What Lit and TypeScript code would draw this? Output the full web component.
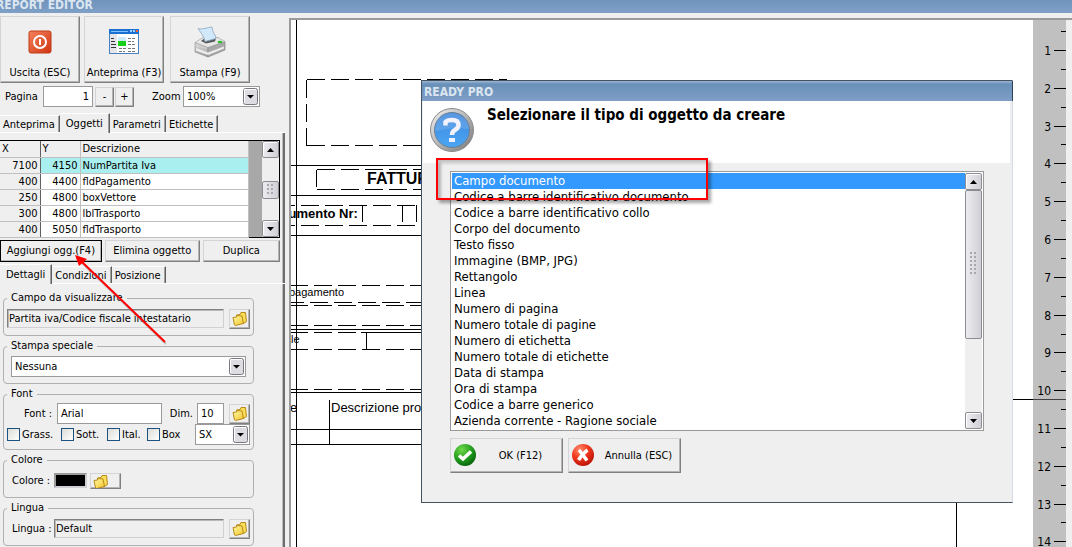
import { LitElement, html, svg, css } from "lit";
import { customElement, property } from "lit/decorators.js";
import { classMap } from "lit/directives/class-map.js";

const shared = css`
  :host,
  button,
  input,
  select {
    font-family: "DejaVu Sans Condensed", "Noto Sans", sans-serif;
    font-size: 11px;
    line-height: 14px;
    color: #000;
  }
  * {
    box-sizing: border-box;
  }
  button {
    margin: 0;
    padding: 0;
    background: #efefef;
    border: 1px solid;
    border-color: #d4d4d8 #808080 #808080 #d4d4d8;
    box-shadow: inset -1px -1px #b4b4b4;
    white-space: nowrap;
  }
  svg {
    display: block;
  }
`;

const folder = html`<svg width="16" height="16" viewBox="0 0 16 16" aria-hidden="true">
  <defs>
    <linearGradient id="fo" x1="0" y1="0" x2="1" y2="1">
      <stop offset="0" stop-color="#fff9a8" />
      <stop offset="1" stop-color="#f3c428" />
    </linearGradient>
  </defs>
  <path d="M4.500 4L8 3.500L9 1.500L13.500 1.500L14.500 10.500L11.500 12.500L5 12Z" fill="#f9dc58" stroke="#b88a18" />
  <path d="M1 6.500L4.500 6L5.500 4.500L10 5L11.500 12.500L3.500 14.500L2.500 14Z" fill="url(#fo)" stroke="#b88a18" />
</svg>`;

@customElement("drop-down")
class DropDown extends LitElement {
  @property() value = "";
  @property() label = "";
  static styles = [
    shared,
    css`
      :host {
        display: flex;
        position: relative;
        height: 21px;
      }
      select {
        appearance: none;
        width: 100%;
        border: 1px solid #9a9a9a;
        border-radius: 0;
        background: #fff;
        padding: 0 20px 0 3px;
        outline: none;
      }
      .arrow {
        position: absolute;
        right: 1px;
        top: 2px;
        pointer-events: none;
      }
    `,
  ];
  render() {
    return html`<select aria-label=${this.label}>
        <option>${this.value}</option>
      </select>
      <svg class="arrow" width="16" height="17" viewBox="0 0 16 17">
        <rect x="0.5" y="0.5" width="14" height="16" rx="2" fill="#dcdce2" stroke="#77777f" />
        <path d="M1.5 15V1.5H13" fill="none" stroke="#fff" />
        <path d="M4 7H11L7.5 10.5Z" fill="#000" />
      </svg>`;
  }
}

@customElement("scroll-bar")
class ScrollBar extends LitElement {
  static styles = [
    shared,
    css`
      :host {
        display: flex;
        flex-direction: column;
        width: 17px;
        background: #efefef;
      }
      .end,
      .thumb {
        border: 1px solid #8c8c92;
        border-radius: 2px;
        background: linear-gradient(90deg, #ececf0, #cfcfd6);
      }
      .end {
        height: 17px;
        flex: none;
        display: grid;
        place-items: center;
        box-shadow: inset 1px 1px #fff;
      }
      .before {
        flex: var(--before, 0) 0 0;
      }
      .after {
        flex: var(--after, 1) 0 0;
      }
      .thumb {
        flex: var(--thumb, 1) 0 0;
        display: grid;
        place-items: center;
      }
      .grip {
        width: 7px;
        height: var(--grip, 11px);
        background: radial-gradient(circle at 1px 1px, #a8a8ae 1px, transparent 1px) 0 0 / 4px 4px;
      }
    `,
  ];
  render() {
    return html`<div class="end">
        <svg width="7" height="4" viewBox="0 0 7 4"><path d="M0 4H7L3.5 0Z" /></svg>
      </div>
      <div class="before"></div>
      <div class="thumb"><div class="grip"></div></div>
      <div class="after"></div>
      <div class="end">
        <svg width="7" height="4" viewBox="0 0 7 4"><path d="M0 0H7L3.5 4Z" /></svg>
      </div>`;
  }
}

@customElement("tab-strip")
class TabStrip extends LitElement {
  @property({ type: Array }) tabs: string[] = [];
  @property({ type: Number }) active = 0;
  static styles = [
    shared,
    css`
      :host {
        display: flex;
        align-items: flex-end;
        height: 20px;
        border-bottom: 1px solid #fff;
      }
      button {
        height: 17px;
        padding: 2px 4px 0 3px;
        border: 0;
        border-top: 1px solid #fff;
        border-right: 1px solid #606060;
        box-shadow: inset -1px 0 #a0a0a0;
      }
      .active {
        height: 20px;
        padding: 1px 6px 0;
        margin-bottom: -1px;
      }
    `,
  ];
  render() {
    return this.tabs.map(
      (t, i) => html`<button role="tab" class=${classMap({ active: i === this.active })}>${t}</button>`
    );
  }
}

const ROWS = [
  ["7100", "4150", "NumPartita Iva"],
  ["400", "4400", "fldPagamento"],
  ["250", "4800", "boxVettore"],
  ["300", "4800", "lblTrasporto"],
  ["400", "5050", "fldTrasporto"],
];

@customElement("side-panel")
class SidePanel extends LitElement {
  static styles = [
    shared,
    css`
      :host {
        display: flex;
        flex-direction: column;
        position: relative;
        background: #efefef;
        padding-top: 3px;
      }
      .tools {
        display: flex;
        gap: 4px;
      }
      .tool {
        width: 80px;
        height: 67px;
        display: flex;
        flex-direction: column;
        align-items: center;
        justify-content: space-between;
        padding: 9px 0 2px;
      }
      .tool:last-child {
        margin-left: 2px;
      }
      .pager {
        display: flex;
        align-items: center;
        height: 21px;
        margin: 3px 0 6px;
        padding-left: 5px;
        flex: none;
      }
      .pager label {
        width: 38px;
      }
      .pager .zoom {
        width: 31px;
        margin-left: 18px;
      }
      .pager drop-down {
        width: 77px;
      }
      tab-strip {
        flex: none;
        width: 285px;
      }
      input {
        border: 1px solid #9a9a9a;
        border-radius: 0;
        background: #fff;
        padding: 0 3px;
        height: 21px;
        margin: 0;
        outline: none;
        min-width: 0;
      }
      .page {
        width: 50px;
        text-align: right;
      }
      .step {
        width: 19px;
        height: 20px;
        margin-left: 1px;
      }
      .page + .step {
        margin-left: 2px;
      }
      .sheet {
        flex: 1;
        width: 285px;
        border-right: 2px solid #6c6c6c;
        box-shadow: inset -1px 0 #bdbdbd;
        padding-top: 7px;
      }
      .grid {
        display: flex;
        width: 280px;
        height: 98px;
        border: 1px solid #000;
        border-left: 0;
        background: #a8a8a8;
      }
      table {
        border-collapse: collapse;
        table-layout: fixed;
        width: 249px;
        border-right: 1px solid #606060;
      }
      th,
      td {
        height: 16px;
        padding: 0 2px;
        font-weight: normal;
        text-align: left;
        background: #fff;
        border-right: 1px solid #c0c0c0;
        border-bottom: 1px solid #c0c0c0;
        white-space: nowrap;
        line-height: 15px;
      }
      th {
        background: #efefef;
      }
      .num {
        text-align: right;
      }
      .first {
        background: #efefef;
        border-right: 1px solid #606060;
      }
      .on td:not(.first) {
        background: #a9efef;
      }
      .grid scroll-bar {
        margin-left: auto;
        --before: 24;
        --thumb: 16;
        --after: 22;
      }
      .actions {
        display: flex;
        gap: 3px;
        width: 280px;
        margin: 2px 0 2px;
      }
      .actions button {
        height: 22px;
        flex: 95 0 0;
      }
      .actions .main {
        flex: 102 0 0;
        border-color: #000;
      }
      .actions .last {
        flex: 77 0 0;
      }
      .details {
        width: 284px;
        padding: 7px 30px 0 3px;
      }
      fieldset {
        border: 1px solid #b0b0b0;
        border-radius: 4px;
        margin: 0 0 3px;
        padding: 3px 3px 6px;
        min-width: 0;
      }
      .tight {
        padding: 2px 3px 4px;
      }
      legend {
        padding: 0 4px;
        margin-left: 0;
        height: 14px;
      }
      .line {
        display: flex;
        align-items: center;
        height: 21px;
      }
      .pad {
        padding-left: 4px;
      }
      .read {
        flex: 1;
        height: 19px;
        padding: 0 1px;
        background: #efefef;
        border-color: #808080 #d0d0d4 #d0d0d4 #808080;
        box-shadow: inset 1px 1px #b8b8b8;
      }
      .pick {
        width: 21px;
        height: 20px;
        margin-left: 5px;
        flex: none;
        display: grid;
        place-items: center;
      }
      .wide {
        width: 31px;
        height: 16px;
        margin-left: 3px;
        padding-right: 10px;
        overflow: hidden;
      }
      .fill {
        flex: 1;
        margin-right: 4px;
      }
      .checks label {
        display: flex;
        align-items: center;
        gap: 2px;
        flex: none;
      }
      .checks label {
        width: 46px;
      }
      .checks label:first-child {
        width: 54px;
      }
      .checks label:nth-child(3) {
        width: 40px;
      }
      .checks input {
        appearance: none;
        width: 13px;
        height: 13px;
        flex: none;
        border: 1px solid #1c5180;
        background: linear-gradient(135deg, #dcdcd7, #fff);
        padding: 0;
      }
      .checks drop-down {
        width: 55px;
        margin-left: auto;
      }
      .swatch {
        width: 33px;
        height: 15px;
        background: #000;
        border: 2px solid;
        border-color: #9a9a9a #d0d0d4 #d0d0d4 #9a9a9a;
      }
      .cap {
        width: 47px;
        padding-left: 5px;
        flex: none;
        white-space: nowrap;
      }
      .indent {
        width: 50px;
        padding-left: 17px;
      }
      .dim {
        margin: 0 4px 0 auto;
      }
      .name {
        width: 105px;
      }
      .size {
        width: 27px;
      }
      .pointer {
        position: absolute;
        left: 70px;
        top: 237px;
        pointer-events: none;
      }
    `,
  ];
  render() {
    return html`
      <div class="tools">
        <button class="tool">
          <svg width="32" height="32" viewBox="0 0 32 32">
            <defs>
              <linearGradient id="pw" x1="0" y1="0" x2="1" y2="1">
                <stop offset="0" stop-color="#f4835c" /><stop offset="1" stop-color="#cf3410" />
              </linearGradient>
            </defs>
            <rect x="5" y="5" width="22" height="22" rx="2" fill="url(#pw)" stroke="#c23a18" />
            <circle cx="16" cy="16" r="6" fill="none" stroke="#fff" stroke-width="2" />
            <path d="M16 13V19" stroke="#fff" stroke-width="2" />
          </svg>
          Uscita (ESC)
        </button>
        <button class="tool">
          <svg width="32" height="32" viewBox="0 0 32 32">
            <rect x="1.500" y="3.500" width="29" height="24" fill="#fff" stroke="#4a80c0" />
            <rect x="1" y="3" width="30" height="5" fill="#1a6fd0" />
            <path d="M3 5.500H20" stroke="#7ec0ff" />
            <rect x="22" y="4" width="2" height="2" fill="#9fd0ff" />
            <rect x="25" y="4" width="2" height="2" fill="#9fd0ff" />
            <rect x="28" y="4" width="2" height="2" fill="#f06030" />
            <rect x="2" y="8" width="7" height="19" fill="#e4e4ea" />
            <path d="M3 12.500H6M3 15.500H7M3 18.500H8M3 21.500H8" stroke="#333" />
            <rect x="10" y="11" width="8" height="5" fill="#cfeaf8" />
            <rect x="10" y="15" width="8" height="5" fill="#18d018" />
            <path d="M20 12.500H28M20 15.500H26M20 18.500H28M11 22.500H18M20 22.500H28M11 25.500H17M20 25.500H27" stroke="#777" stroke-dasharray="3 1" />
          </svg>
          Anteprima (F3)
        </button>
        <button class="tool">
          <svg width="32" height="32" viewBox="0 0 32 32">
            <defs>
              <linearGradient id="pl" x1="0" y1="0" x2="0" y2="1">
                <stop offset="0" stop-color="#e4e4e4" /><stop offset="1" stop-color="#9a9a9a" />
              </linearGradient>
            </defs>
            <path d="M1 16.500L14 21.500V31L1 26Z" fill="url(#pl)" stroke="#8c8c8c" stroke-width="0.6" />
            <path d="M14 21.500L31 15.500V24L14 31Z" fill="#a8a8a8" stroke="#808080" stroke-width="0.6" />
            <path d="M2 22L14 26.500L30 20.500V22.500L14 29L2 24.500Z" fill="#ededed" />
            <path d="M1 16.500L9 11.500L24 11.500L31 15.500L14 21.500Z" fill="#e8e8e8" stroke="#999" stroke-width="0.6" />
            <path d="M7 15L11 12H22L21 15.500L12 17.500Z" fill="#5a5a5a" />
            <path d="M4 2.500C9 4 14 1 18 1C18 6 22 9 22 12.500L11 15.500C10 10 7 7 4 2.500Z" fill="#d2e8fb" stroke="#8aa4bd" stroke-width="0.8" />
            <ellipse cx="26" cy="16" rx="2.500" ry="1.300" fill="#2fc02f" />
          </svg>
          Stampa (F9)
        </button>
      </div>
      <div class="pager">
        <label for="page">Pagina</label>
        <input id="page" class="page" value="1" />
        <button class="step">-</button>
        <button class="step">+</button>
        <span class="zoom">Zoom</span>
        <drop-down label="Zoom" value="100%"></drop-down>
      </div>
      <tab-strip .tabs=${["Anteprima", "Oggetti", "Parametri", "Etichette"]} active="1"></tab-strip>
      <div class="sheet">
        <div class="grid">
          <table>
            <colgroup>
              <col style="width:40px" />
              <col style="width:40px" />
              <col />
            </colgroup>
            <tr>
              <th class="first">X</th>
              <th>Y</th>
              <th>Descrizione</th>
            </tr>
            ${ROWS.map(
              (r, i) => html`<tr class=${classMap({ on: i === 0 })}>
                <td class="num first">${r[0]}</td>
                <td class="num">${r[1]}</td>
                <td>${r[2]}</td>
              </tr>`
            )}
          </table>
          <scroll-bar></scroll-bar>
        </div>
        <div class="actions">
          <button class="main">Aggiungi ogg.(F4)</button>
          <button>Elimina oggetto</button>
          <button class="last">Duplica</button>
        </div>
        <tab-strip .tabs=${["Dettagli", "Condizioni", "Posizione"]} active="0"></tab-strip>
        <div class="details">
          <fieldset>
            <legend>Campo da visualizzare</legend>
            <div class="line">
              <input class="read" aria-label="Campo da visualizzare" readonly value="Partita iva/Codice fiscale intestatario" />
              <button class="pick" aria-label="Scegli campo">${folder}</button>
            </div>
          </fieldset>
          <fieldset>
            <legend>Stampa speciale</legend>
            <div class="line pad">
              <drop-down class="fill" label="Stampa speciale" value="Nessuna"></drop-down>
            </div>
          </fieldset>
          <fieldset class="tight">
            <legend>Font</legend>
            <div class="line">
              <label class="indent" for="font">Font :</label>
              <input id="font" class="name" value="Arial" />
              <label class="dim" for="size">Dim.</label>
              <input id="size" class="size" value="10" />
              <button class="pick" aria-label="Scegli font">${folder}</button>
            </div>
            <div class="line checks">
              <label><input type="checkbox" />Grass.</label>
              <label><input type="checkbox" />Sott.</label>
              <label><input type="checkbox" />Ital.</label>
              <label><input type="checkbox" />Box</label>
              <drop-down label="Allineamento" value="SX"></drop-down>
            </div>
          </fieldset>
          <fieldset>
            <legend>Colore</legend>
            <div class="line">
              <span class="cap">Colore :</span>
              <div class="swatch"></div>
              <button class="pick wide" aria-label="Scegli colore">${folder}</button>
            </div>
          </fieldset>
          <fieldset>
            <legend>Lingua</legend>
            <div class="line">
              <label class="cap" for="lang">Lingua :</label>
              <input id="lang" class="read" readonly value="Default" />
              <button class="pick" aria-label="Scegli lingua">${folder}</button>
            </div>
          </fieldset>
        </div>
      </div>
      <svg class="pointer" width="100" height="96" viewBox="0 0 100 96">
        <path d="M96 94L12 13" stroke="#999" stroke-width="2" opacity="0.5" />
        <path d="M95 92L11 11" stroke="#f00" stroke-width="2" />
        <path d="M5 5L17 9L9 16Z" fill="#f00" />
      </svg>
    `;
  }
}

@customElement("report-canvas")
class ReportCanvas extends LitElement {
  static styles = [
    shared,
    css`
      :host {
        display: block;
        background: #fff;
        overflow: hidden;
      }
      svg {
        width: 100%;
        height: 100%;
      }
      .lines {
        stroke: #000;
        fill: none;
        shape-rendering: crispEdges;
      }
      .dashed {
        stroke-dasharray: 18 6;
      }
      text {
        font-family: "Liberation Sans", sans-serif;
      }
      .big {
        font-size: 16px;
        font-weight: bold;
      }
      .mid {
        font-size: 13px;
        font-weight: bold;
      }
      .plain {
        font-size: 13px;
      }
      .small {
        font-size: 11px;
      }
    `,
  ];
  render() {
    return html`<svg>
      <text class="big" x="76" y="164">FATTURA</text>
      <text class="mid" x="-27" y="198">Documento Nr:</text>
      <text class="small" x="-2" y="276">pagamento</text>
      <text class="small" x="-6" y="323">ale</text>
      <text class="plain" x="-1" y="392">e</text>
      <text class="plain" x="40" y="392">Descrizione prodotto</text>
      <g class="lines">
        <path d="M5.500 0V600M0 145.500H300M0 175.500H300M0 215.500H300M0 309.500H300M0 372.500H300M0 409.500H300M0 424.500H300M38.500 380V424M75.500 312V329M71.500 185V202M111.500 185V202M125.500 185V202M70 312.500H300M665.500 379V600M665.500 379.500H800" />
        <path class="dashed" d="M15.500 59.500H216M15.500 59.500V126M15.500 125.500H216M25.500 149.500H216M25.500 149.500V167M25.500 169.500H216M-14 185.500H126M-14 205.500H126M-1 265.500H300M-5 282.500H300M-1 285.500H300M-1 305.500H300M-1 312.500H70M-1 329.500H300M-1 369.500H300" />
      </g>
    </svg>`;
  }
}

@customElement("side-ruler")
class SideRuler extends LitElement {
  static styles = [
    shared,
    css`
      :host {
        display: block;
        background: #c0c0c0;
        overflow: hidden;
      }
      svg {
        width: 33px;
        height: 100%;
      }
      text {
        font-size: 12px;
        text-anchor: end;
      }
      path {
        stroke: #000;
        shape-rendering: crispEdges;
      }
      .edge {
        stroke: #404040;
      }
    `,
  ];
  render() {
    const marks = Array.from({ length: 14 }, (_, i) => i + 1);
    return html`<svg>
      ${marks.map((n) => {
        const y = Math.round(n * 37.8 - 7.8) + 0.5;
        const half = Math.round(n * 37.8 - 26.7) + 0.5;
        return svg`<path d="M21 ${y}H33M28 ${half}H33" /><text x="18" y=${y + 4}>${n}</text>`;
      })}
      <path class="edge" d="M0 379.500H33" />
    </svg>`;
  }
}

const ITEMS = [
  "Campo documento",
  "Codice a barre identificativo documento",
  "Codice a barre identificativo collo",
  "Corpo del documento",
  "Testo fisso",
  "Immagine (BMP, JPG)",
  "Rettangolo",
  "Linea",
  "Numero di pagina",
  "Numero totale di pagine",
  "Numero di etichetta",
  "Numero totale di etichette",
  "Data di stampa",
  "Ora di stampa",
  "Codice a barre generico",
  "Azienda corrente - Ragione sociale",
];

@customElement("object-dialog")
class ObjectDialog extends LitElement {
  static styles = [
    shared,
    css`
      :host {
        display: block;
        background: #efefef;
        border: 1px solid #44525f;
        border-right-color: #d5dbe3;
      }
      .title {
        height: 20px;
        padding: 3px 2px 0;
        background: linear-gradient(#9db8d3, #6990b8 3px, #7f9fc6);
        box-shadow: 1px 0 #2d4258;
        color: #dbe5f0;
        font-size: 12px;
        font-weight: bold;
        line-height: 16px;
      }
      .head {
        display: flex;
        gap: 12px;
        height: 62px;
        margin: 0 2px 0 1px;
        padding: 6px 6px;
        background: #fff;
      }
      h1 {
        margin: 0;
        font-size: 15px;
        line-height: 16px;
      }
      .body {
        padding: 8px 28px 29px;
      }
      .list {
        display: flex;
        border: 1px solid #9a9a9a;
        padding: 1px;
        background: #fff;
      }
      ul {
        flex: 1;
        list-style: none;
        margin: 0;
        padding: 0;
      }
      li {
        height: 16px;
        line-height: 16px;
        font-size: 13px;
        padding-left: 2px;
      }
      .on {
        background: #3399ff;
        color: #fff;
      }
      scroll-bar {
        --before: 0;
        --thumb: 148;
        --after: 74;
        --grip: 24px;
      }
      .buttons {
        display: flex;
        gap: 5px;
        margin-top: 7px;
      }
      .buttons button {
        display: flex;
        align-items: center;
        width: 113px;
        height: 35px;
        padding: 0 3px;
      }
      .buttons span {
        flex: 1;
        text-align: center;
        padding-left: 4px;
      }
      .mark {
        position: absolute;
        left: 14px;
        top: 77px;
        width: 272px;
        height: 42px;
        border: 2px solid #f00;
        box-shadow: 3px 3px 3px rgba(0, 0, 0, 0.35), inset 3px 3px 3px rgba(0, 0, 0, 0.25);
      }
    `,
  ];
  render() {
    return html`
      <div class="title">READY PRO</div>
      <div class="head">
        <svg width="46" height="46" viewBox="0 0 46 46">
          <defs>
            <linearGradient id="rim" x1="0" y1="0" x2="1" y2="1">
              <stop offset="0" stop-color="#f4f4f4" /><stop offset="1" stop-color="#777" />
            </linearGradient>
            <linearGradient id="blue" x1="0" y1="0" x2="0" y2="1">
              <stop offset="0" stop-color="#3c86dc" /><stop offset="1" stop-color="#4ba6f4" />
            </linearGradient>
          </defs>
          <circle cx="23" cy="23" r="21.500" fill="url(#rim)" stroke="#8a8a8a" />
          <circle cx="23" cy="23" r="17.500" fill="url(#blue)" stroke="#6b7f96" />
          <path d="M6 24A17 17 0 0 1 40 22Q22 20 6 24Z" fill="#fff" opacity="0.14" />
          <path d="M16.500 18.500V15Q18 13 23 13Q29.500 13 29.500 18Q29.500 21 26 23Q23 24.500 23 28" fill="none" stroke="#f2f2ff" stroke-width="4.500" />
          <rect x="20" y="31" width="6" height="4" fill="#f2f2ff" />
        </svg>
        <h1>Selezionare il tipo di oggetto da creare</h1>
      </div>
      <div class="body">
        <div class="list">
          <ul role="listbox" aria-label="Tipo di oggetto">
            ${ITEMS.map(
              (t, i) => html`<li role="option" aria-selected=${i === 0} class=${classMap({ on: i === 0 })}>${t}</li>`
            )}
          </ul>
          <scroll-bar></scroll-bar>
        </div>
        <div class="buttons">
          <button>
            <svg width="24" height="24" viewBox="0 0 24 24">
              <defs>
                <radialGradient id="ok" cx="0.35" cy="0.25" r="0.8">
                  <stop offset="0" stop-color="#6fd84a" /><stop offset="0.6" stop-color="#1f9a1c" /><stop offset="1" stop-color="#07600c" />
                </radialGradient>
              </defs>
              <circle cx="11" cy="11" r="11" fill="url(#ok)" />
              <path d="M5 11.500L9 15L17 7.500" fill="none" stroke="#fff" stroke-width="3.500" />
            </svg>
            <span>OK (F12)</span>
          </button>
          <button>
            <svg width="24" height="24" viewBox="0 0 24 24">
              <defs>
                <radialGradient id="no" cx="0.35" cy="0.25" r="0.8">
                  <stop offset="0" stop-color="#ff8a6a" /><stop offset="0.5" stop-color="#f0381c" /><stop offset="1" stop-color="#b81208" />
                </radialGradient>
              </defs>
              <circle cx="11" cy="11" r="11" fill="url(#no)" />
              <path d="M7 6Q11 11 15 16.500M15.500 6Q10 10 6.500 16" fill="none" stroke="#fff" stroke-width="3.500" />
            </svg>
            <span>Annulla (ESC)</span>
          </button>
        </div>
      </div>
      <div class="mark"></div>
    `;
  }
}

@customElement("app-root")
class AppRoot extends LitElement {
  static styles = [
    shared,
    css`
      :host {
        display: flex;
        flex-direction: column;
        height: 100vh;
        overflow: hidden;
        position: relative;
        background: #efefef;
      }
      header {
        flex: none;
        height: 13px;
        background: linear-gradient(#6f94bc, #7f9fc6);
        color: #dbe5f0;
        font-size: 12px;
        font-weight: bold;
        line-height: 11px;
        text-indent: -4px;
      }
      main {
        flex: 1;
        display: flex;
        min-height: 0;
      }
      side-panel {
        width: 289px;
        flex: none;
      }
      .view {
        flex: 1;
        display: flex;
        margin: 5px 0 0;
        border-top: 2px solid #9a9a9a;
        border-left: 2px solid #9a9a9a;
      }
      report-canvas {
        flex: 1;
      }
      side-ruler {
        width: 33px;
        margin-right: 6px;
      }
      object-dialog {
        position: absolute;
        left: 421px;
        top: 80px;
        width: 592px;
      }
    `,
  ];
  render() {
    return html`
      <header>REPORT EDITOR</header>
      <main>
        <side-panel></side-panel>
        <div class="view">
          <report-canvas></report-canvas>
          <side-ruler></side-ruler>
        </div>
      </main>
      <object-dialog role="dialog" aria-label="READY PRO"></object-dialog>
    `;
  }
}
